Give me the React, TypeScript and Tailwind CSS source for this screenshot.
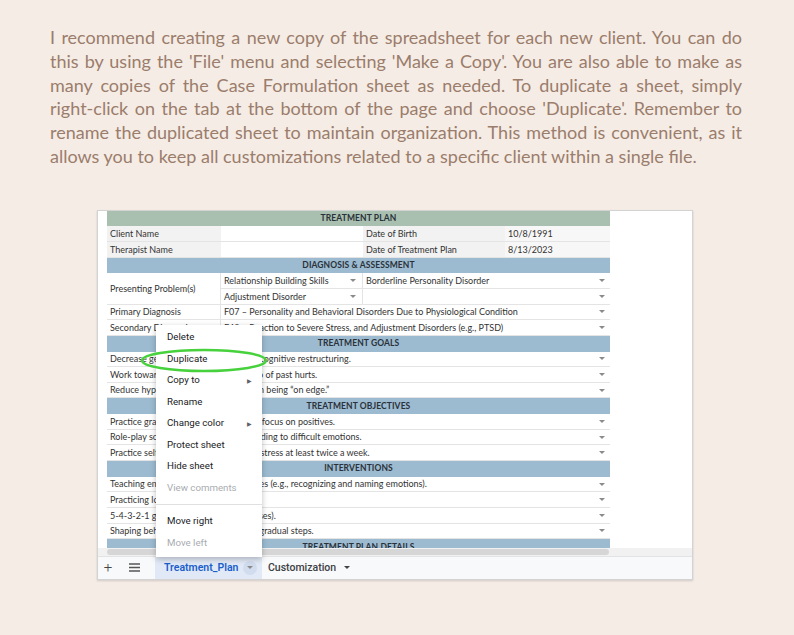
import React from 'react';

const lines = [
  "I recommend creating a new copy of the spreadsheet for each new client. You can do",
  "this by using the 'File' menu and selecting 'Make a Copy'. You are also able to make as",
  "many copies of the Case Formulation sheet as needed. To duplicate a sheet, simply",
  "right-click on the tab at the bottom of the page and choose 'Duplicate'. Remember to",
  "rename the duplicated sheet to maintain organization. This method is convenient, as it",
  "allows you to keep all customizations related to a specific client within a single file.",
];

const Tri = ({ className = '' }: { className?: string }) => (
  <span
    className={`inline-block w-0 h-0 border-l-[3px] border-r-[3px] border-t-[3px] border-l-transparent border-r-transparent border-t-[#8a8a8a] ${className}`}
  />
);

function SectionHeader({ label, green }: { label: string; green?: boolean }) {
  return (
    <div
      className={`h-[15.65px] flex items-center justify-center text-[8.5px] font-bold text-[#2b3138] tracking-[0.1px] ${
        green ? 'bg-[#a9c0b1]' : 'bg-[#9cbbd1]'
      }`}
    >
      {label}
    </div>
  );
}

function LineRow({ a, b }: { a: string; b: string }) {
  return (
    <div className="h-[15.65px] flex items-center border-b border-[#e4e4e4] bg-white">
      <div className="w-[114px] h-full flex items-center pl-[3px] overflow-hidden whitespace-nowrap border-r border-[#e4e4e4]">
        {a}
      </div>
      <div className="flex-1 h-full flex items-center pl-[3px] overflow-hidden whitespace-nowrap">{b}</div>
      <Tri className="mr-[5px]" />
    </div>
  );
}

function MenuItem({ label, disabled, arrow }: { label: string; disabled?: boolean; arrow?: boolean }) {
  return (
    <div
      className={`h-[21.5px] flex items-center pl-[11px] pr-[10px] justify-between ${
        disabled ? 'text-[#a9acb0]' : 'text-[#202124]'
      }`}
    >
      <span>{label}</span>
      {arrow && <span className="text-[6px] text-[#5f6368]">▶</span>}
    </div>
  );
}

export default function App() {
  return (
    <div className="w-[794px] h-[635px] bg-[#f5ece6] overflow-hidden">
      <div
        className="pl-[50px] pr-[52px] pt-[26px] text-[#9b7d6b] font-normal text-[18px] leading-[23.8px]"
        style={{ fontFamily: 'Lato, sans-serif' }}
      >
        {lines.map((l, i) => (
          <div
            key={i}
            className={`whitespace-nowrap ${i < lines.length - 1 ? 'text-justify [text-align-last:justify]' : ''}`}
          >
            {l}
          </div>
        ))}
      </div>

      <div className="mt-[41px] ml-[97px] w-[596px] h-[370px] bg-white border border-[#d3d3d3] shadow-[0_1px_2px_rgba(0,0,0,0.15)] relative overflow-hidden flex flex-col">
        {/* sheet body */}
        <div
          className="h-[337px] overflow-hidden pl-[9px] text-[9px] text-[#333]"
          style={{ fontFamily: 'Lato, "Open Sans", sans-serif' }}
        >
          <div className="w-[503px]">
            <SectionHeader label="TREATMENT PLAN" green />
            {[
              ['Client Name', '', 'Date of Birth', '10/8/1991'],
              ['Therapist Name', '', 'Date of Treatment Plan', '8/13/2023'],
            ].map((r) => (
              <div key={r[0]} className="h-[15.65px] flex border-b border-[#e4e4e4]">
                <div className="w-[114px] flex items-center pl-[3px] bg-[#f2f2f2]">{r[0]}</div>
                <div className="w-[142px] bg-white" />
                <div className="w-[142px] flex items-center pl-[3px] bg-[#f2f2f2]">{r[2]}</div>
                <div className="flex-1 flex items-center pl-[3px] bg-[#f7f7f7]">{r[3]}</div>
              </div>
            ))}
            <SectionHeader label="DIAGNOSIS & ASSESSMENT" />
            <div className="h-[31.3px] flex">
              <div className="w-[114px] flex items-center pl-[3px] border-b border-r border-[#e4e4e4]">
                Presenting Problem(s)
              </div>
              <div className="flex-1 flex flex-col">
                <div className="h-[15.65px] flex items-center border-b border-[#e4e4e4]">
                  <div className="w-[142px] h-full flex items-center justify-between pl-[3px] pr-[6px] border-r border-[#e4e4e4]">
                    <span>Relationship Building Skills</span>
                    <Tri />
                  </div>
                  <div className="flex-1 pl-[3px]">Borderline Personality Disorder</div>
                  <Tri className="mr-[5px]" />
                </div>
                <div className="h-[15.65px] flex items-center border-b border-[#e4e4e4]">
                  <div className="w-[142px] h-full flex items-center justify-between pl-[3px] pr-[6px] border-r border-[#e4e4e4]">
                    <span>Adjustment Disorder</span>
                    <Tri />
                  </div>
                  <div className="flex-1" />
                  <Tri className="mr-[5px]" />
                </div>
              </div>
            </div>
            <LineRow a="Primary Diagnosis" b="F07 – Personality and Behavioral Disorders Due to Physiological Condition" />
            <LineRow a="Secondary Diagnosis" b="F43 – Reaction to Severe Stress, and Adjustment Disorders (e.g., PTSD)" />
            <SectionHeader label="TREATMENT GOALS" />
            <LineRow a="Decrease general anxiety" b="Through cognitive restructuring." />
            <LineRow a="Work towards forgiveness" b="Letting go of past hurts." />
            <LineRow a="Reduce hypervigilance" b="Less often being “on edge.”" />
            <SectionHeader label="TREATMENT OBJECTIVES" />
            <LineRow a="Practice gratitude daily" b="Shift to a focus on positives." />
            <LineRow a="Role-play scenarios" b="In responding to difficult emotions." />
            <LineRow a="Practice self-soothing" b="During distress at least twice a week." />
            <SectionHeader label="INTERVENTIONS" />
            <LineRow a="Teaching emotion skills" b="Techniques (e.g., recognizing and naming emotions)." />
            <LineRow a="Practicing loving-kindness" b="" />
            <LineRow a="5-4-3-2-1 grounding" b="(Five senses)." />
            <LineRow a="Shaping behaviors" b="Through gradual steps." />
            <SectionHeader label="TREATMENT PLAN DETAILS" />
          </div>
        </div>

        {/* scrollbar */}
        <div className="h-[8px] bg-[#f1f1f1] flex items-center pl-[9px]">
          <div className="w-[502px] h-[6px] rounded-full bg-[#d6d6d6]" />
        </div>

        {/* tab bar */}
        <div
          className="flex-1 bg-[#f8f9fa] border-t border-[#e3e3e3] flex items-stretch text-[10.5px]"
          style={{ fontFamily: 'Roboto, sans-serif' }}
        >
          <div className="w-[20px] flex items-center justify-center text-[15px] leading-none text-[#444] font-light">+</div>
          <div className="w-[32px] flex items-center justify-center">
            <svg width="11" height="9" viewBox="0 0 11 9">
              <path d="M0 1h11M0 4.5h11M0 8h11" stroke="#555" strokeWidth="1.3" />
            </svg>
          </div>
          <div className="ml-[5px] w-[107px] bg-[#e1e9f6] flex items-center pl-[9px] gap-[5px] font-semibold text-[#1b5fcc]">
            <span>Treatment_Plan</span>
            <span className="w-[14px] h-[14px] rounded-full bg-[#d2dcef] flex items-center justify-center">
              <Tri className="border-t-[#1b5fcc]" />
            </span>
          </div>
          <div className="flex items-center pl-[6px] gap-[8px] font-medium text-[#3c4043]">
            <span>Customization</span>
            <Tri className="border-t-[#444]" />
          </div>
        </div>

        {/* context menu */}
        <div
          className="absolute left-[58px] top-[114px] w-[106px] bg-white shadow-[0_2px_6px_rgba(0,0,0,0.25)] pt-[2px] pb-[3px] text-[9.7px]"
          style={{ fontFamily: 'Roboto, sans-serif' }}
        >
          <MenuItem label="Delete" />
          <MenuItem label="Duplicate" />
          <MenuItem label="Copy to" arrow />
          <MenuItem label="Rename" />
          <MenuItem label="Change color" arrow />
          <MenuItem label="Protect sheet" />
          <MenuItem label="Hide sheet" />
          <MenuItem label="View comments" disabled />
          <div className="h-[12px] flex items-center">
            <div className="w-full h-px bg-[#e0e0e0]" />
          </div>
          <MenuItem label="Move right" />
          <MenuItem label="Move left" disabled />
        </div>

        {/* green highlight */}
        <svg className="absolute left-[42px] top-[137px] pointer-events-none" width="128" height="25" viewBox="0 0 128 25">
          <ellipse cx="64" cy="12.5" rx="62" ry="10.5" fill="none" stroke="#47d13c" strokeWidth="2.6" />
        </svg>
      </div>
    </div>
  );
}
